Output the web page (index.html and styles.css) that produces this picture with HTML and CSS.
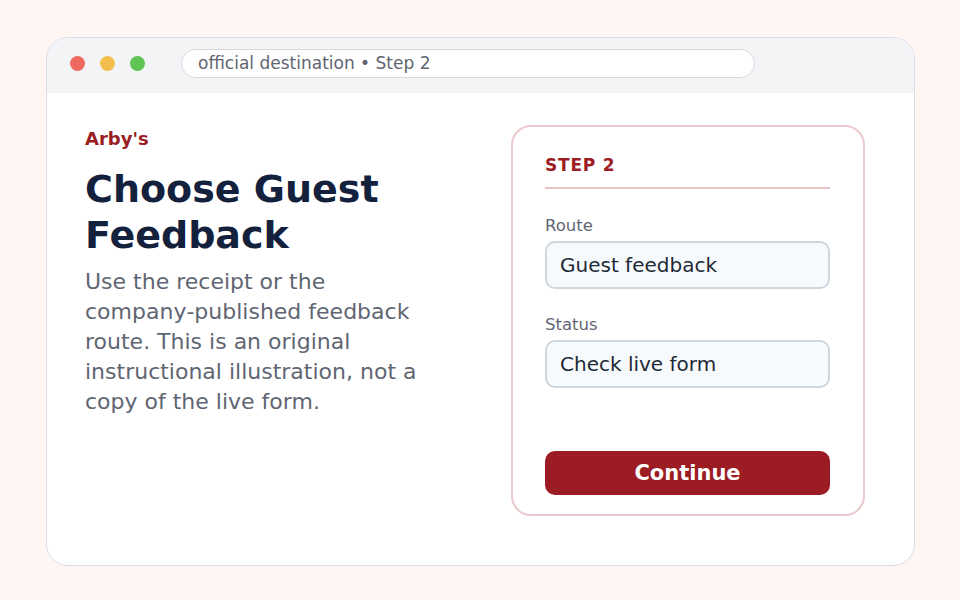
FILE: index.html
```html
<!DOCTYPE html>
<html lang="en">
<head>
    <meta charset="UTF-8">
    <title>Choose Guest Feedback</title>
    <link rel="stylesheet" href="styles.css">
</head>
<body>
<div class="window">
    <div class="titlebar">
        <span class="dot red"></span>
        <span class="dot yellow"></span>
        <span class="dot green"></span>
        <div class="address">official destination • Step 2</div>
    </div>
    <div class="content">
        <div class="intro">
            <div class="brand">Arby's</div>
            <h1>Choose Guest Feedback</h1>
            <p>Use the receipt or the company&#8209;published feedback route. This is an original instructional illustration, not a copy of the live form.</p>
        </div>
        <div class="card">
            <div class="step">STEP 2</div>
            <label>Route
                <div class="field">Guest feedback</div>
            </label>
            <label>Status
                <div class="field">Check live form</div>
            </label>
            <button type="button">Continue</button>
        </div>
    </div>
</div>
</body>
</html>
```

FILE: styles.css
```css
body { font-family: "DejaVu Sans", sans-serif; background: #fff5f3; margin: 0; padding: 37px 45px 35px 46px; }
.window { height: 529px; background: #fff; border: 1.5px solid #d9dde6; border-radius: 22px; overflow: hidden; display: flex; flex-direction: column; box-sizing: border-box; }
.titlebar { height: 55px; box-sizing: border-box; background: #f3f4f6; display: flex; align-items: center; padding: 0 0 5px 23px; flex-shrink: 0; }
.dot { width: 15px; height: 15px; border-radius: 50%; margin-right: 15px; }
.red { background: #ee6a5f; }
.yellow { background: #f4be4f; }
.green { background: #5fc453; }
.address { margin: 1px 0 0 21px; width: 574px; height: 29px; box-sizing: border-box; background: #fff; border: 1px solid #d6d9df; border-radius: 15px; padding-left: 16px; font-size: 17px; line-height: 26px; color: #5f6570; }
.content { flex: 1; display: flex; justify-content: space-between; padding: 32px 49px 49px 38px; }
.intro { width: 345px; padding-top: 3px; }
.brand { font-size: 18px; font-weight: bold; color: #9b1c23; margin-top: 0; }
h1 { font-size: 38px; line-height: 46px; color: #14213d; margin: 17px 0 0; }
p { font-size: 22px; line-height: 30px; color: #5f6673; margin: 9px 0 0; }
.card { width: 354px; box-sizing: border-box; border: 2px solid #ebc9cd; border-radius: 20px; padding: 28px 33px 19px 32px; display: flex; flex-direction: column; }
.step { font-size: 17px; font-weight: bold; letter-spacing: 0.8px; color: #9b1c23; padding-bottom: 12px; border-bottom: 2px solid #e8c6c8; }
label { display: block; font-size: 16.5px; color: #5f6673; margin-top: 27px; }
label + label { margin-top: 26px; }
.field { margin-top: 6px; height: 48px; box-sizing: border-box; background: #f7fafc; border: 2px solid #cfd6e0; border-radius: 10px; padding-left: 13px; font-size: 20px; line-height: 44px; color: #1f2937; }
button { margin-top: auto; height: 44px; background: #9b1c23; color: #fff; border: none; border-radius: 10px; font-family: inherit; font-size: 21px; font-weight: bold; }
```
